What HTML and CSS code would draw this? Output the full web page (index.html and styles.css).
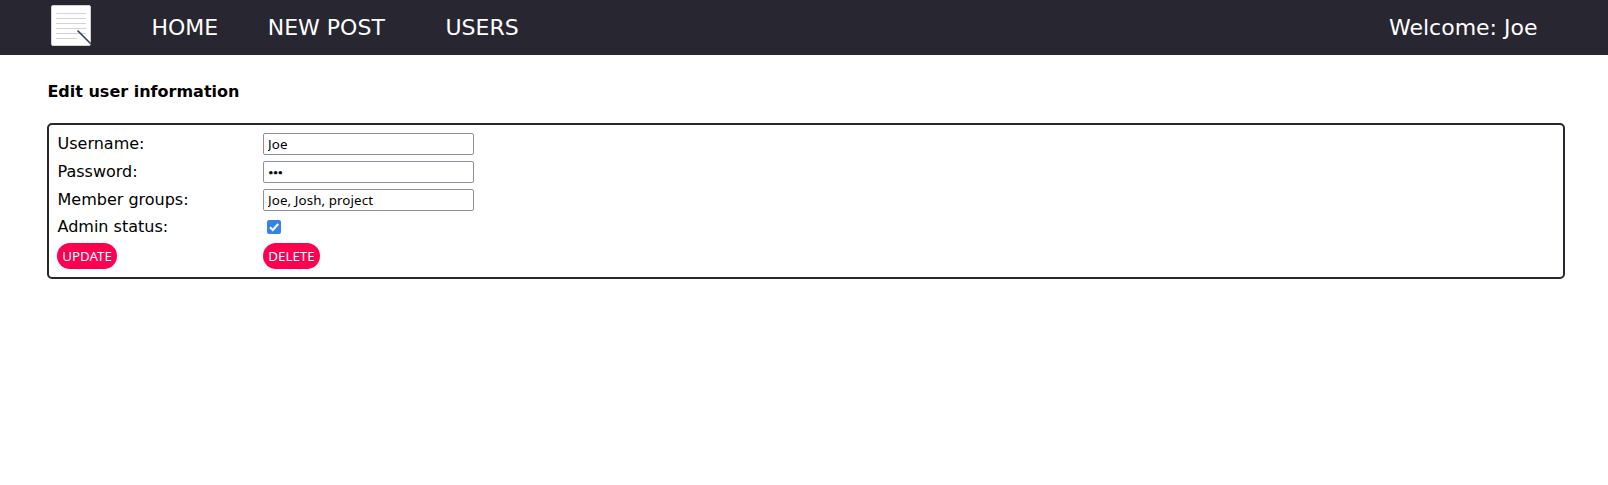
FILE: index.html
```html
<!DOCTYPE html>
<html lang="en">
<head>
<meta charset="utf-8">
<title>Edit user</title>
<link rel="stylesheet" href="styles.css">
</head>
<body>
<header class="bar">
  <svg class="logo" width="42" height="42" viewBox="0 0 42 42">
    <rect x="0.5" y="0.5" width="39" height="40" rx="1.5" fill="#fff" stroke="#d4d2d4"/>
    <path d="M5 8.5h30M5 13.5h30M5 18.5h30M5 23.5h30M5 28.5h30M5 33.5h21" stroke="#d2d2dd" stroke-width="1.2"/>
    <path d="M26.5 25.5l13.5 13.5" stroke="#2b3d63" stroke-width="1.6"/>
  </svg>
  <nav class="nav">
    <a class="home">HOME</a>
    <a class="post">NEW POST</a>
    <a class="users">USERS</a>
  </nav>
  <span class="welcome">Welcome: Joe</span>
</header>
<main class="content">
  <h1 class="title">Edit user information</h1>
  <form class="form">
    <label class="label">Username:</label><input class="field" type="text" value="Joe">
    <label class="label">Password:</label><input class="field password" type="text" value="•••">
    <label class="label">Member groups:</label><input class="field" type="text" value="Joe, Josh, project">
    <label class="label">Admin status:</label>
    <svg class="check" width="14" height="14" viewBox="0 0 14 14">
      <rect width="14" height="14" rx="2" fill="#3584e4"/>
      <path d="M3 7.2l2.8 2.8L11.2 4" fill="none" stroke="#fff" stroke-width="2"/>
    </svg>
    <button class="btn update" type="button">UPDATE</button>
    <button class="btn delete" type="button">DELETE</button>
  </form>
</main>
</body>
</html>
```
FILE: styles.css
```css
* { box-sizing: border-box; }
body { margin: 0; background: #fff; color: #000; font: 16px/19px "DejaVu Sans", sans-serif; }
.bar { display: flex; align-items: center; height: 55px; padding: 0 70.5px 0 51px; background: #282630; color: #fff; font-size: 22px; line-height: 26px; }
.logo { margin-bottom: 3px; }
.nav { display: flex; margin-left: 57px; }
.home { margin-left: 1.4px; }
.post { margin-left: 49.6px; }
.users { margin-left: 60.6px; }
.welcome { margin-left: auto; }
.content { padding: 27px 43px 0 47px; }
.title { margin: 0 0 22px; padding-left: 0.4px; font-size: 16px; line-height: 19px; font-weight: bold; }
.form { display: grid; grid-template-columns: 206px 211px; grid-template-rows: 22px 22px 22px 20px 26px; row-gap: 6px; height: 156px; padding: 8px; border: 2px solid #282630; border-radius: 5px; align-items: center; }
.label { padding: 0 0 2px 0.5px; }
.field { width: 211px; height: 22px; margin: 0; padding: 0 4px 1px; border: 1px solid #8f8f9d; border-radius: 2px; background: #fff; color: #000; font: 13.33px "Noto Sans", sans-serif; letter-spacing: 0.1px; }
.password { padding-bottom: 0; font-family: "DejaVu Sans", sans-serif; font-size: 9.5px; letter-spacing: -0.9px; -webkit-text-stroke: 0.7px #000; }
.check { margin-left: 4px; }
.btn { justify-self: start; height: 26px; padding: 0; border: 0; border-radius: 13px; background: #ff0050; color: #fff; font: 13.33px "Noto Sans", sans-serif; }
.update { width: 60px; }
.delete { width: 57px; }
```
